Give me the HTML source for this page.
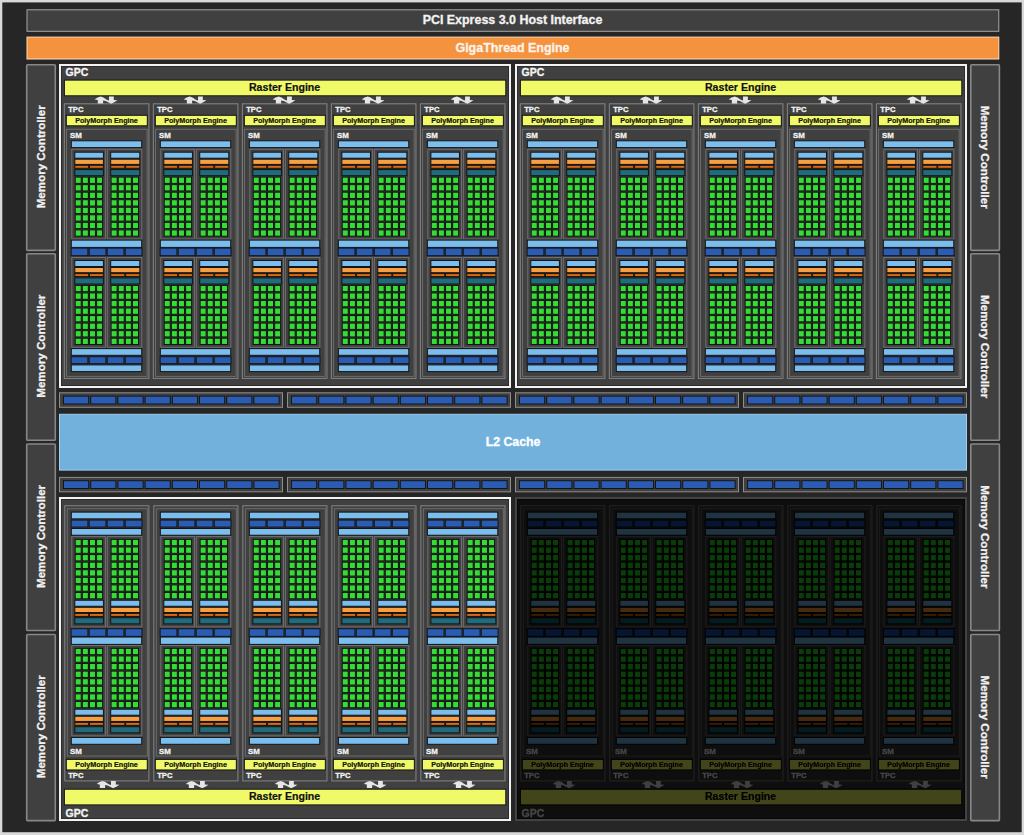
<!DOCTYPE html><html><head><meta charset="utf-8"><style>html,body{margin:0;padding:0;background:#d9d9d9}body{width:1024px;height:835px;overflow:hidden}svg{display:block}</style></head><body><svg width="1024" height="835" viewBox="0 0 1024 835"><style>
.g{fill:#35dc35;stroke:#141414;stroke-width:1}
.lb{fill:#7bbdec;stroke:#141414}
.or{fill:#f6a043;stroke:#141414}
.do{fill:#dc6810;stroke:#141414}
.te{fill:#206b7c;stroke:#141414}
.db{fill:#2b5cb3;stroke:#141414}
.ye{fill:#f0fa68;stroke:#141414}
.cb{fill:none;stroke:#707070}
.tb{fill:none;stroke:#858585}
.sb{fill:none;stroke:#6c6c6c}
.gb{fill:#404040;stroke:#f2f2f2;stroke-width:2}
.gi{fill:none;stroke:#2c2c2c;stroke-width:1}
.pci{fill:#404040;stroke:#a6a6a6}
.giga{fill:#f4923d;stroke:#ffdcb8}
.mc{fill:#404040;stroke:#878787;stroke-width:1.6}
.bus{fill:#404040;stroke:#8e8e8e}
.ar{fill:#e6e6e6}
text{font-family:"Liberation Sans",sans-serif;font-weight:bold}
.w{fill:#f2f2f2;stroke:#f2f2f2;stroke-width:0.3}
.k{fill:#111;stroke:#111;stroke-width:0.2}
.mct{font-size:11.6px}
</style><defs><g id="grid"><rect class="g" x="-0.1" y="28.4" width="6" height="6.3"/><rect class="g" x="7.03" y="28.4" width="6" height="6.3"/><rect class="g" x="14.16" y="28.4" width="6" height="6.3"/><rect class="g" x="21.29" y="28.4" width="6" height="6.3"/><rect class="g" x="-0.1" y="35.94" width="6" height="6.3"/><rect class="g" x="7.03" y="35.94" width="6" height="6.3"/><rect class="g" x="14.16" y="35.94" width="6" height="6.3"/><rect class="g" x="21.29" y="35.94" width="6" height="6.3"/><rect class="g" x="-0.1" y="43.48" width="6" height="6.3"/><rect class="g" x="7.03" y="43.48" width="6" height="6.3"/><rect class="g" x="14.16" y="43.48" width="6" height="6.3"/><rect class="g" x="21.29" y="43.48" width="6" height="6.3"/><rect class="g" x="-0.1" y="51.02" width="6" height="6.3"/><rect class="g" x="7.03" y="51.02" width="6" height="6.3"/><rect class="g" x="14.16" y="51.02" width="6" height="6.3"/><rect class="g" x="21.29" y="51.02" width="6" height="6.3"/><rect class="g" x="-0.1" y="58.56" width="6" height="6.3"/><rect class="g" x="7.03" y="58.56" width="6" height="6.3"/><rect class="g" x="14.16" y="58.56" width="6" height="6.3"/><rect class="g" x="21.29" y="58.56" width="6" height="6.3"/><rect class="g" x="-0.1" y="66.1" width="6" height="6.3"/><rect class="g" x="7.03" y="66.1" width="6" height="6.3"/><rect class="g" x="14.16" y="66.1" width="6" height="6.3"/><rect class="g" x="21.29" y="66.1" width="6" height="6.3"/><rect class="g" x="-0.1" y="73.64" width="6" height="6.3"/><rect class="g" x="7.03" y="73.64" width="6" height="6.3"/><rect class="g" x="14.16" y="73.64" width="6" height="6.3"/><rect class="g" x="21.29" y="73.64" width="6" height="6.3"/><rect class="g" x="-0.1" y="81.18" width="6" height="6.3"/><rect class="g" x="7.03" y="81.18" width="6" height="6.3"/><rect class="g" x="14.16" y="81.18" width="6" height="6.3"/><rect class="g" x="21.29" y="81.18" width="6" height="6.3"/></g><g id="sec"><rect class="cb" x="7.5" y="0.5" width="33.6" height="89.8"/><rect class="lb" x="10.5" y="3.5" width="28.6" height="6"/><rect class="or" x="10.5" y="10.5" width="28.6" height="5.2"/><rect class="do" x="10.5" y="16.6" width="13.9" height="3"/><rect class="do" x="25.2" y="16.6" width="13.9" height="3"/><rect class="te" x="10.5" y="20.9" width="28.6" height="6.1"/><use href="#grid" x="11"/><rect class="cb" x="43" y="0.5" width="34.5" height="89.8"/><rect class="lb" x="46.4" y="3.5" width="29.1" height="6"/><rect class="or" x="46.4" y="10.5" width="29.1" height="5.2"/><rect class="do" x="46.4" y="16.6" width="14.15" height="3"/><rect class="do" x="61.35" y="16.6" width="14.15" height="3"/><rect class="te" x="46.4" y="20.9" width="29.1" height="6.1"/><use href="#grid" x="46.9"/></g><g id="secB"><rect class="cb" x="7.5" y="0.5" width="33.6" height="89.8"/><rect class="te" x="10.5" y="3.5" width="28.6" height="6.1"/><rect class="do" x="10.5" y="10.9" width="13.9" height="3"/><rect class="do" x="25.2" y="10.9" width="13.9" height="3"/><rect class="or" x="10.5" y="14.8" width="28.6" height="5.2"/><rect class="lb" x="10.5" y="21" width="28.6" height="6"/><use href="#grid" x="11"/><rect class="cb" x="43" y="0.5" width="34.5" height="89.8"/><rect class="te" x="46.4" y="3.5" width="29.1" height="6.1"/><rect class="do" x="46.4" y="10.9" width="14.15" height="3"/><rect class="do" x="61.35" y="10.9" width="14.15" height="3"/><rect class="or" x="46.4" y="14.8" width="29.1" height="5.2"/><rect class="lb" x="46.4" y="21" width="29.1" height="6"/><use href="#grid" x="46.9"/></g><g id="tpc"><rect class="tb" x="0" y="103.8" width="84.6" height="274.6"/><rect class="ye" x="2" y="115.3" width="81" height="10.5"/><rect class="sb" x="2.2" y="129.3" width="80.6" height="247.1"/><rect class="lb" x="7" y="140.8" width="70.4" height="6.8"/><use href="#sec" y="148.7"/><use href="#sec" y="257.0"/><rect class="lb" x="7" y="240.1" width="70.4" height="7.3"/><rect class="db" x="6.8" y="248.1" width="16.82" height="7.6"/><rect class="db" x="24.83" y="248.1" width="16.83" height="7.6"/><rect class="db" x="42.85" y="248.1" width="16.83" height="7.6"/><rect class="db" x="60.88" y="248.1" width="16.83" height="7.6"/><rect class="lb" x="7" y="348.6" width="70.4" height="6.7"/><rect class="db" x="6.8" y="356.7" width="16.82" height="7"/><rect class="db" x="24.83" y="356.7" width="16.83" height="7"/><rect class="db" x="42.85" y="356.7" width="16.83" height="7"/><rect class="db" x="60.88" y="356.7" width="16.83" height="7"/><rect class="lb" x="7" y="364.9" width="70.4" height="6.7"/></g><g id="tpcB"><rect class="tb" x="0.5" y="104.4" width="84.1" height="273.5"/><rect class="ye" x="2" y="115.3" width="81" height="10.5"/><rect class="sb" x="3" y="129.1" width="80" height="245.9"/><rect class="lb" x="7" y="140.8" width="70.4" height="6.8"/><use href="#secB" y="148.7"/><use href="#secB" y="257.0"/><rect class="lb" x="7" y="240.1" width="70.4" height="7.3"/><rect class="db" x="6.8" y="248.1" width="16.82" height="7.6"/><rect class="db" x="24.83" y="248.1" width="16.83" height="7.6"/><rect class="db" x="42.85" y="248.1" width="16.83" height="7.6"/><rect class="db" x="60.88" y="248.1" width="16.83" height="7.6"/><rect class="lb" x="7" y="348.6" width="70.4" height="6.7"/><rect class="db" x="6.8" y="356.7" width="16.82" height="7"/><rect class="db" x="24.83" y="356.7" width="16.83" height="7"/><rect class="db" x="42.85" y="356.7" width="16.83" height="7"/><rect class="db" x="60.88" y="356.7" width="16.83" height="7"/><rect class="lb" x="7" y="364.9" width="70.4" height="6.7"/></g><g id="gpc"><rect class="gb" x="60" y="65" width="450" height="322"/><rect class="gi" x="61.5" y="66.5" width="447" height="319"/><rect class="ye" x="64.4" y="80.1" width="441.4" height="15.7"/><use href="#tpc" x="64.3"/><use href="#tpc" x="153.32"/><use href="#tpc" x="242.34"/><use href="#tpc" x="331.36"/><use href="#tpc" x="420.38"/></g><g id="gpcB"><rect class="gb" x="60" y="65" width="450" height="322"/><rect class="gi" x="61.5" y="66.5" width="447" height="319"/><rect class="ye" x="64.4" y="80.1" width="441.4" height="15.7"/><use transform="translate(0 -0.94) scale(1 1.006)" href="#tpcB" x="64.3"/><use transform="translate(0 -0.94) scale(1 1.006)" href="#tpcB" x="153.32"/><use transform="translate(0 -0.94) scale(1 1.006)" href="#tpcB" x="242.34"/><use transform="translate(0 -0.94) scale(1 1.006)" href="#tpcB" x="331.36"/><use transform="translate(0 -0.94) scale(1 1.006)" href="#tpcB" x="420.38"/></g><path id="arr" class="ar" d="M36.4 0.3Q33.2 0.9 30.3 3.5L33.5 3.9L33.5 7.5L38.8 7.5L38.8 4.4Q41.5 4.6 43.8 6.2L46.8 7.6Q50 6.2 53.1 4.1L49.5 3.9L49.5 0.3L44.7 0.3L44.7 4.5Q42.8 4.1 41.3 3.0Q39.5 1.2 36.4 0.3Z"/><filter id="dimf" filterUnits="userSpaceOnUse" x="510" y="490" width="465" height="340" color-interpolation-filters="sRGB"><feComponentTransfer><feFuncR type="linear" slope="0.3" intercept="-0.02"/><feFuncG type="linear" slope="0.3" intercept="-0.02"/><feFuncB type="linear" slope="0.3" intercept="-0.02"/></feComponentTransfer></filter></defs><rect x="0" y="0" width="1024" height="835" fill="#d9d9d9"/>
<rect x="2.3" y="2.4" width="1019.4" height="829.8" fill="#262626"/>
<rect class="pci" x="27" y="9.8" width="971.8" height="21.5"/>
<rect class="giga" x="27" y="37.1" width="971.8" height="21.9"/>
<rect class="mc" x="26.7" y="64.8" width="28.6" height="185.6" rx="0.8"/>
<rect class="mc" x="970.8" y="64.8" width="28.6" height="185.6" rx="0.8"/>
<rect class="mc" x="26.7" y="253.7" width="28.6" height="186.6" rx="0.8"/>
<rect class="mc" x="970.8" y="253.7" width="28.6" height="186.6" rx="0.8"/>
<rect class="mc" x="26.7" y="444" width="28.6" height="186.5" rx="0.8"/>
<rect class="mc" x="970.8" y="444" width="28.6" height="186.5" rx="0.8"/>
<rect class="mc" x="26.7" y="634.5" width="28.6" height="186.1" rx="0.8"/>
<rect class="mc" x="970.8" y="634.5" width="28.6" height="186.1" rx="0.8"/>
<g><use href="#gpc" x="0"/><use href="#arr" x="64.3" y="96.1"/><use href="#arr" x="153.32" y="96.1"/><use href="#arr" x="242.34" y="96.1"/><use href="#arr" x="331.36" y="96.1"/><use href="#arr" x="420.38" y="96.1"/><text class="w" x="65.6" y="76.2" font-size="10.5">GPC</text><text class="k" x="284.6" y="91" font-size="10.6" text-anchor="middle">Raster Engine</text><text class="w" x="68.2" y="112.3" font-size="7.6">TPC</text><text class="k" x="106.5" y="123.2" font-size="7.15" text-anchor="middle">PolyMorph Engine</text><text class="w" x="70" y="137.9" font-size="7.9">SM</text><text class="w" x="157.22" y="112.3" font-size="7.6">TPC</text><text class="k" x="195.52" y="123.2" font-size="7.15" text-anchor="middle">PolyMorph Engine</text><text class="w" x="159.02" y="137.9" font-size="7.9">SM</text><text class="w" x="246.24" y="112.3" font-size="7.6">TPC</text><text class="k" x="284.54" y="123.2" font-size="7.15" text-anchor="middle">PolyMorph Engine</text><text class="w" x="248.04" y="137.9" font-size="7.9">SM</text><text class="w" x="335.26" y="112.3" font-size="7.6">TPC</text><text class="k" x="373.56" y="123.2" font-size="7.15" text-anchor="middle">PolyMorph Engine</text><text class="w" x="337.06" y="137.9" font-size="7.9">SM</text><text class="w" x="424.28" y="112.3" font-size="7.6">TPC</text><text class="k" x="462.58" y="123.2" font-size="7.15" text-anchor="middle">PolyMorph Engine</text><text class="w" x="426.08" y="137.9" font-size="7.9">SM</text></g>
<g><use href="#gpc" x="456"/><use href="#arr" x="520.3" y="96.1"/><use href="#arr" x="609.32" y="96.1"/><use href="#arr" x="698.34" y="96.1"/><use href="#arr" x="787.36" y="96.1"/><use href="#arr" x="876.38" y="96.1"/><text class="w" x="521.6" y="76.2" font-size="10.5">GPC</text><text class="k" x="740.6" y="91" font-size="10.6" text-anchor="middle">Raster Engine</text><text class="w" x="524.2" y="112.3" font-size="7.6">TPC</text><text class="k" x="562.5" y="123.2" font-size="7.15" text-anchor="middle">PolyMorph Engine</text><text class="w" x="526" y="137.9" font-size="7.9">SM</text><text class="w" x="613.22" y="112.3" font-size="7.6">TPC</text><text class="k" x="651.52" y="123.2" font-size="7.15" text-anchor="middle">PolyMorph Engine</text><text class="w" x="615.02" y="137.9" font-size="7.9">SM</text><text class="w" x="702.24" y="112.3" font-size="7.6">TPC</text><text class="k" x="740.54" y="123.2" font-size="7.15" text-anchor="middle">PolyMorph Engine</text><text class="w" x="704.04" y="137.9" font-size="7.9">SM</text><text class="w" x="791.26" y="112.3" font-size="7.6">TPC</text><text class="k" x="829.56" y="123.2" font-size="7.15" text-anchor="middle">PolyMorph Engine</text><text class="w" x="793.06" y="137.9" font-size="7.9">SM</text><text class="w" x="880.28" y="112.3" font-size="7.6">TPC</text><text class="k" x="918.58" y="123.2" font-size="7.15" text-anchor="middle">PolyMorph Engine</text><text class="w" x="882.08" y="137.9" font-size="7.9">SM</text></g>
<g><g transform="translate(0 885) scale(1 -1)"><use href="#gpcB" x="0"/></g><use href="#arr" x="66.3" y="780.6"/><use href="#arr" x="155.32" y="780.6"/><use href="#arr" x="244.34" y="780.6"/><use href="#arr" x="333.36" y="780.6"/><use href="#arr" x="422.38" y="780.6"/><text class="w" x="65.6" y="816.9" font-size="10.5">GPC</text><text class="k" x="284.6" y="800.3" font-size="10.6" text-anchor="middle">Raster Engine</text><text class="w" x="68.2" y="778.1" font-size="7.6">TPC</text><text class="k" x="106.5" y="767.3" font-size="7.15" text-anchor="middle">PolyMorph Engine</text><text class="w" x="70" y="753.9" font-size="7.9">SM</text><text class="w" x="157.22" y="778.1" font-size="7.6">TPC</text><text class="k" x="195.52" y="767.3" font-size="7.15" text-anchor="middle">PolyMorph Engine</text><text class="w" x="159.02" y="753.9" font-size="7.9">SM</text><text class="w" x="246.24" y="778.1" font-size="7.6">TPC</text><text class="k" x="284.54" y="767.3" font-size="7.15" text-anchor="middle">PolyMorph Engine</text><text class="w" x="248.04" y="753.9" font-size="7.9">SM</text><text class="w" x="335.26" y="778.1" font-size="7.6">TPC</text><text class="k" x="373.56" y="767.3" font-size="7.15" text-anchor="middle">PolyMorph Engine</text><text class="w" x="337.06" y="753.9" font-size="7.9">SM</text><text class="w" x="424.28" y="778.1" font-size="7.6">TPC</text><text class="k" x="462.58" y="767.3" font-size="7.15" text-anchor="middle">PolyMorph Engine</text><text class="w" x="426.08" y="753.9" font-size="7.9">SM</text></g>
<g filter="url(#dimf)"><g transform="translate(0 885) scale(1 -1)"><use href="#gpcB" x="456"/></g><use href="#arr" x="522.3" y="780.6"/><use href="#arr" x="611.32" y="780.6"/><use href="#arr" x="700.34" y="780.6"/><use href="#arr" x="789.36" y="780.6"/><use href="#arr" x="878.38" y="780.6"/><text class="w" x="521.6" y="816.9" font-size="10.5">GPC</text><text class="k" x="740.6" y="800.3" font-size="10.6" text-anchor="middle">Raster Engine</text><text class="w" x="524.2" y="778.1" font-size="7.6">TPC</text><text class="k" x="562.5" y="767.3" font-size="7.15" text-anchor="middle">PolyMorph Engine</text><text class="w" x="526" y="753.9" font-size="7.9">SM</text><text class="w" x="613.22" y="778.1" font-size="7.6">TPC</text><text class="k" x="651.52" y="767.3" font-size="7.15" text-anchor="middle">PolyMorph Engine</text><text class="w" x="615.02" y="753.9" font-size="7.9">SM</text><text class="w" x="702.24" y="778.1" font-size="7.6">TPC</text><text class="k" x="740.54" y="767.3" font-size="7.15" text-anchor="middle">PolyMorph Engine</text><text class="w" x="704.04" y="753.9" font-size="7.9">SM</text><text class="w" x="791.26" y="778.1" font-size="7.6">TPC</text><text class="k" x="829.56" y="767.3" font-size="7.15" text-anchor="middle">PolyMorph Engine</text><text class="w" x="793.06" y="753.9" font-size="7.9">SM</text><text class="w" x="880.28" y="778.1" font-size="7.6">TPC</text><text class="k" x="918.58" y="767.3" font-size="7.15" text-anchor="middle">PolyMorph Engine</text><text class="w" x="882.08" y="753.9" font-size="7.9">SM</text></g>
<rect class="bus" x="59.5" y="392.8" width="223" height="14.5"/>
<rect class="db" x="63.5" y="396.1" width="25.2" height="7.9"/>
<rect class="db" x="90.7" y="396.1" width="25.2" height="7.9"/>
<rect class="db" x="117.9" y="396.1" width="25.2" height="7.9"/>
<rect class="db" x="145.1" y="396.1" width="25.2" height="7.9"/>
<rect class="db" x="172.3" y="396.1" width="25.2" height="7.9"/>
<rect class="db" x="199.5" y="396.1" width="25.2" height="7.9"/>
<rect class="db" x="226.7" y="396.1" width="25.2" height="7.9"/>
<rect class="db" x="253.9" y="396.1" width="25.2" height="7.9"/>
<rect class="bus" x="287.5" y="392.8" width="223" height="14.5"/>
<rect class="db" x="291.5" y="396.1" width="25.2" height="7.9"/>
<rect class="db" x="318.7" y="396.1" width="25.2" height="7.9"/>
<rect class="db" x="345.9" y="396.1" width="25.2" height="7.9"/>
<rect class="db" x="373.1" y="396.1" width="25.2" height="7.9"/>
<rect class="db" x="400.3" y="396.1" width="25.2" height="7.9"/>
<rect class="db" x="427.5" y="396.1" width="25.2" height="7.9"/>
<rect class="db" x="454.7" y="396.1" width="25.2" height="7.9"/>
<rect class="db" x="481.9" y="396.1" width="25.2" height="7.9"/>
<rect class="bus" x="515.5" y="392.8" width="223" height="14.5"/>
<rect class="db" x="519.5" y="396.1" width="25.2" height="7.9"/>
<rect class="db" x="546.7" y="396.1" width="25.2" height="7.9"/>
<rect class="db" x="573.9" y="396.1" width="25.2" height="7.9"/>
<rect class="db" x="601.1" y="396.1" width="25.2" height="7.9"/>
<rect class="db" x="628.3" y="396.1" width="25.2" height="7.9"/>
<rect class="db" x="655.5" y="396.1" width="25.2" height="7.9"/>
<rect class="db" x="682.7" y="396.1" width="25.2" height="7.9"/>
<rect class="db" x="709.9" y="396.1" width="25.2" height="7.9"/>
<rect class="bus" x="743.5" y="392.8" width="223" height="14.5"/>
<rect class="db" x="747.5" y="396.1" width="25.2" height="7.9"/>
<rect class="db" x="774.7" y="396.1" width="25.2" height="7.9"/>
<rect class="db" x="801.9" y="396.1" width="25.2" height="7.9"/>
<rect class="db" x="829.1" y="396.1" width="25.2" height="7.9"/>
<rect class="db" x="856.3" y="396.1" width="25.2" height="7.9"/>
<rect class="db" x="883.5" y="396.1" width="25.2" height="7.9"/>
<rect class="db" x="910.7" y="396.1" width="25.2" height="7.9"/>
<rect class="db" x="937.9" y="396.1" width="25.2" height="7.9"/>
<rect class="bus" x="59.5" y="477.4" width="223" height="14.4"/>
<rect class="db" x="63.5" y="480.7" width="25.2" height="7.8"/>
<rect class="db" x="90.7" y="480.7" width="25.2" height="7.8"/>
<rect class="db" x="117.9" y="480.7" width="25.2" height="7.8"/>
<rect class="db" x="145.1" y="480.7" width="25.2" height="7.8"/>
<rect class="db" x="172.3" y="480.7" width="25.2" height="7.8"/>
<rect class="db" x="199.5" y="480.7" width="25.2" height="7.8"/>
<rect class="db" x="226.7" y="480.7" width="25.2" height="7.8"/>
<rect class="db" x="253.9" y="480.7" width="25.2" height="7.8"/>
<rect class="bus" x="287.5" y="477.4" width="223" height="14.4"/>
<rect class="db" x="291.5" y="480.7" width="25.2" height="7.8"/>
<rect class="db" x="318.7" y="480.7" width="25.2" height="7.8"/>
<rect class="db" x="345.9" y="480.7" width="25.2" height="7.8"/>
<rect class="db" x="373.1" y="480.7" width="25.2" height="7.8"/>
<rect class="db" x="400.3" y="480.7" width="25.2" height="7.8"/>
<rect class="db" x="427.5" y="480.7" width="25.2" height="7.8"/>
<rect class="db" x="454.7" y="480.7" width="25.2" height="7.8"/>
<rect class="db" x="481.9" y="480.7" width="25.2" height="7.8"/>
<rect class="bus" x="515.5" y="477.4" width="223" height="14.4"/>
<rect class="db" x="519.5" y="480.7" width="25.2" height="7.8"/>
<rect class="db" x="546.7" y="480.7" width="25.2" height="7.8"/>
<rect class="db" x="573.9" y="480.7" width="25.2" height="7.8"/>
<rect class="db" x="601.1" y="480.7" width="25.2" height="7.8"/>
<rect class="db" x="628.3" y="480.7" width="25.2" height="7.8"/>
<rect class="db" x="655.5" y="480.7" width="25.2" height="7.8"/>
<rect class="db" x="682.7" y="480.7" width="25.2" height="7.8"/>
<rect class="db" x="709.9" y="480.7" width="25.2" height="7.8"/>
<rect class="bus" x="743.5" y="477.4" width="223" height="14.4"/>
<rect class="db" x="747.5" y="480.7" width="25.2" height="7.8"/>
<rect class="db" x="774.7" y="480.7" width="25.2" height="7.8"/>
<rect class="db" x="801.9" y="480.7" width="25.2" height="7.8"/>
<rect class="db" x="829.1" y="480.7" width="25.2" height="7.8"/>
<rect class="db" x="856.3" y="480.7" width="25.2" height="7.8"/>
<rect class="db" x="883.5" y="480.7" width="25.2" height="7.8"/>
<rect class="db" x="910.7" y="480.7" width="25.2" height="7.8"/>
<rect class="db" x="937.9" y="480.7" width="25.2" height="7.8"/>
<rect x="59.5" y="414.3" width="907" height="55.8" fill="#73b1dd" stroke="#9fd0f0"/>
<text class="w mct" transform="translate(44.8 156.8) rotate(-90)" text-anchor="middle">Memory Controller</text>
<text class="w mct" transform="translate(981.4 157.2) rotate(90)" text-anchor="middle">Memory Controller</text>
<text class="w mct" transform="translate(44.8 346.2) rotate(-90)" text-anchor="middle">Memory Controller</text>
<text class="w mct" transform="translate(981.4 346.6) rotate(90)" text-anchor="middle">Memory Controller</text>
<text class="w mct" transform="translate(44.8 536.45) rotate(-90)" text-anchor="middle">Memory Controller</text>
<text class="w mct" transform="translate(981.4 536.85) rotate(90)" text-anchor="middle">Memory Controller</text>
<text class="w mct" transform="translate(44.8 726.75) rotate(-90)" text-anchor="middle">Memory Controller</text>
<text class="w mct" transform="translate(981.4 727.15) rotate(90)" text-anchor="middle">Memory Controller</text>
<text class="w" x="513" y="445.9" font-size="12.3" text-anchor="middle" style="fill:#fff;stroke:#fff">L2 Cache</text>
<text class="w" x="512.5" y="23.9" font-size="12.45" text-anchor="middle">PCI Express 3.0 Host Interface</text>
<text class="w" x="512.5" y="51.8" font-size="12.45" text-anchor="middle" style="fill:#fdf3ea;stroke:#fdf3ea">GigaThread Engine</text>
</svg></body></html>
